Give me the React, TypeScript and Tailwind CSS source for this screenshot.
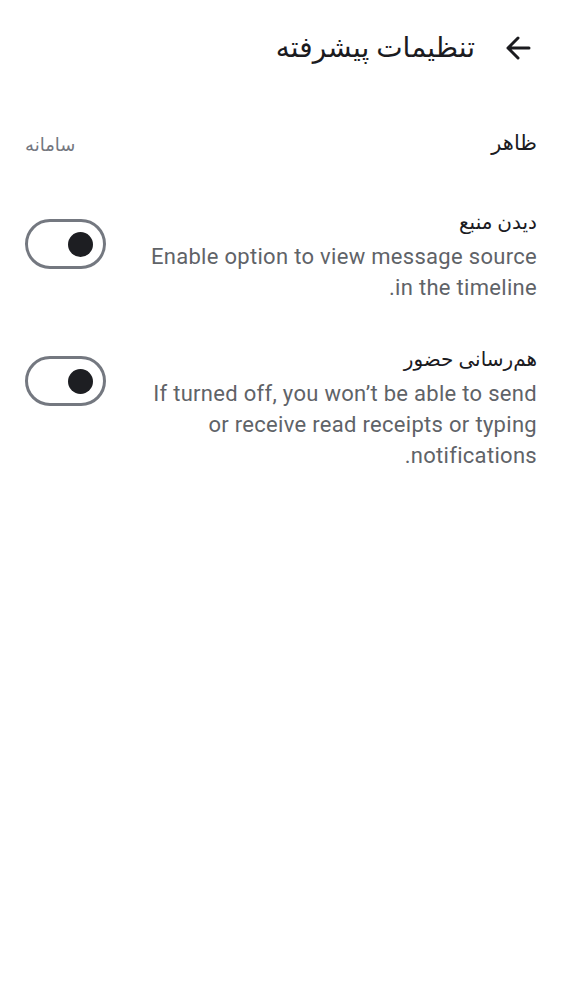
import { FunctionComponent } from 'react'

const font = { fontFamily: 'Roboto, "DejaVu Sans", sans-serif' }

const Toggle: FunctionComponent = () => (
  <div className="flex h-[50px] w-[81px] shrink-0 items-center rounded-full border-[3px] border-[#747880] bg-white px-[10px]">
    <div className="h-[25px] w-[25px] rounded-full bg-[#1d1e22]" />
  </div>
)

const ToggleRow: FunctionComponent<{ title: string; desc: string }> = ({ title, desc }) => (
  <div className="flex items-start justify-between gap-[40px]">
    <div className="flex flex-1 flex-col">
      <div className="mb-[4px] text-[20px] leading-[30px] text-[#1b1b1f]">{title}</div>
      <div className="text-[22px] leading-[31px] tracking-[0.3px] text-[#5f6368]">{desc}</div>
    </div>
    <div className="pt-[12px]">
      <Toggle />
    </div>
  </div>
)

export default function App() {
  return (
    <div dir="rtl" className="min-h-[1000px] w-full bg-white" style={font}>
      <div className="flex h-[96px] items-center gap-[30px] pl-[30px] pr-[31px]">
        <svg width="26" height="26" viewBox="0 0 26 26" fill="none" stroke="#1b1b1f" strokeWidth="3" strokeLinecap="round" strokeLinejoin="round">
          <path d="M24 13H3M13 3 3 13l10 10" />
        </svg>
        <div className="text-[28px] text-[#1b1b1f]">تنظیمات پیشرفته</div>
      </div>
      <div className="flex h-[96px] items-center justify-between px-[25px]">
        <div className="text-[21px] text-[#1b1b1f]">ظاهر</div>
        <div className="text-[18px] text-[#74777f]">سامانه</div>
      </div>
      <div className="flex flex-col gap-[41px] px-[25px] pt-[15px]">
        <ToggleRow title="دیدن منبع" desc="Enable option to view message source in the timeline." />
        <ToggleRow
          title="هم‌رسانی حضور"
          desc="If turned off, you won’t be able to send or receive read receipts or typing notifications."
        />
      </div>
    </div>
  )
}
